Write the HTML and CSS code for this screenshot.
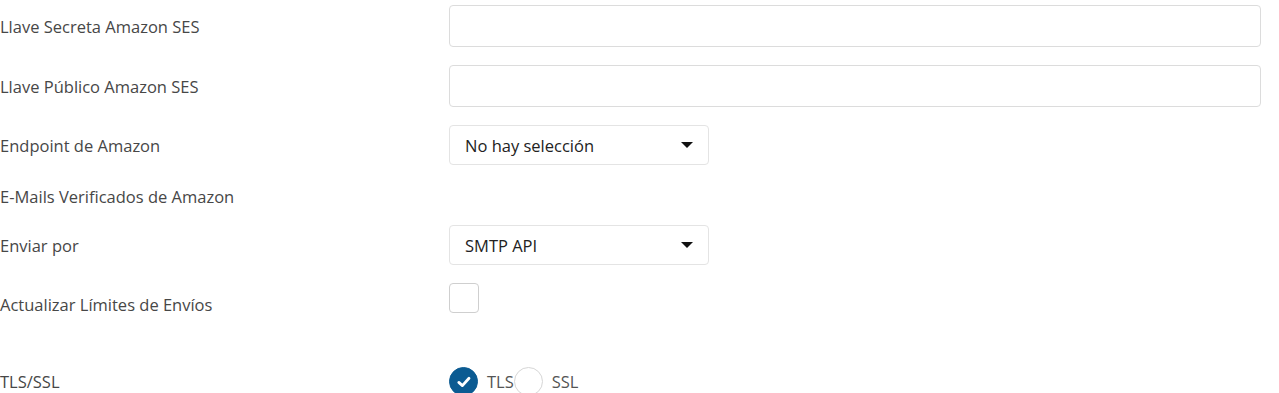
FILE: index.html
```html
<!DOCTYPE html>
<html lang="es">

<head>
    <meta charset="UTF-8">
    <meta name="viewport" content="width=device-width, initial-scale=1.0">
    <title>Amazon SES</title>
    <link rel="stylesheet" href="styles.css">
</head>

<body>

    <form class="settings-form">
        <div class="form-row row-input">
            <label class="form-label">Llave Secreta Amazon SES</label>
            <div class="form-control"><input type="text" class="text-input"></div>
        </div>

        <div class="form-row row-input">
            <label class="form-label">Llave Público Amazon SES</label>
            <div class="form-control"><input type="text" class="text-input"></div>
        </div>

        <div class="form-row row-select">
            <label class="form-label">Endpoint de Amazon</label>
            <div class="form-control">
                <div class="select-box">
                    <span>No hay selección</span>
                    <span class="caret"></span>
                </div>
            </div>
        </div>

        <div class="form-row row-empty">
            <label class="form-label">E-Mails Verificados de Amazon</label>
        </div>

        <div class="form-row row-select">
            <label class="form-label">Enviar por</label>
            <div class="form-control">
                <div class="select-box">
                    <span>SMTP API</span>
                    <span class="caret"></span>
                </div>
            </div>
        </div>

        <div class="form-row row-check">
            <label class="form-label">Actualizar Límites de Envíos</label>
            <div class="form-control"><span class="checkbox"></span></div>
        </div>

        <div class="form-row row-radio">
            <label class="form-label">TLS/SSL</label>
            <div class="form-control radio-group">
                <span class="radio checked">
                    <svg width="18" height="18" viewBox="0 0 18 18">
                        <path d="M3.8 9.4 L7.4 12.6 L14 5.2" fill="none" stroke="#fff" stroke-width="2.8" stroke-linecap="round" stroke-linejoin="round"/>
                    </svg>
                </span>
                <span class="radio-text">TLS</span>
                <span class="radio"></span>
                <span class="radio-text">SSL</span>
            </div>
        </div>
    </form>

</body>

</html>
```

FILE: styles.css
```css
body {
    font-family: "Open Sans", Arial, sans-serif;
    font-size: 16.5px;
    color: #444;
    background-color: #fff;
    margin: 0;
    padding: 0;
}

.settings-form {
    padding: 5px 18px 0 0;
}

.form-row {
    display: grid;
    grid-template-columns: 449px 1fr;
    align-items: center;
}

.row-input {
    height: 42px;
    margin-bottom: 18px;
}

.row-select {
    height: 40px;
    margin-bottom: 18px;
}

.row-empty {
    height: 26px;
    margin-bottom: 16px;
}

.row-check {
    grid-template-rows: 30px;
    height: 30px;
    margin-bottom: 54px;
}

.row-check .form-label {
    align-self: start;
    margin-top: 10px;
}

.row-radio {
    height: 29px;
}

.form-label {
    color: #474747;
}

.text-input {
    box-sizing: border-box;
    width: 100%;
    height: 42px;
    border: 1px solid #dcdcdc;
    border-radius: 4px;
    background: #fff;
    outline: none;
    font-family: inherit;
}

.select-box {
    box-sizing: border-box;
    width: 260px;
    height: 40px;
    border: 1px solid #e4e4e4;
    border-radius: 4px;
    display: flex;
    align-items: center;
    justify-content: space-between;
    padding: 0 15px 0 15px;
    color: #222;
}

.caret {
    width: 0;
    height: 0;
    border-left: 6px solid transparent;
    border-right: 6px solid transparent;
    border-top: 6px solid #111;
}

.checkbox {
    display: block;
    box-sizing: border-box;
    width: 30px;
    height: 30px;
    border: 1px solid #cfcfcf;
    border-radius: 4px;
}

.radio-group {
    display: flex;
    align-items: center;
}

.radio {
    box-sizing: border-box;
    width: 29px;
    height: 29px;
    border-radius: 50%;
    border: 1px solid #d6d6d6;
    display: flex;
    align-items: center;
    justify-content: center;
}

.radio.checked {
    background-color: #0b5b92;
    border-color: #0b5b92;
}

.radio-text {
    margin-left: 9px;
    color: #555;
}
```
